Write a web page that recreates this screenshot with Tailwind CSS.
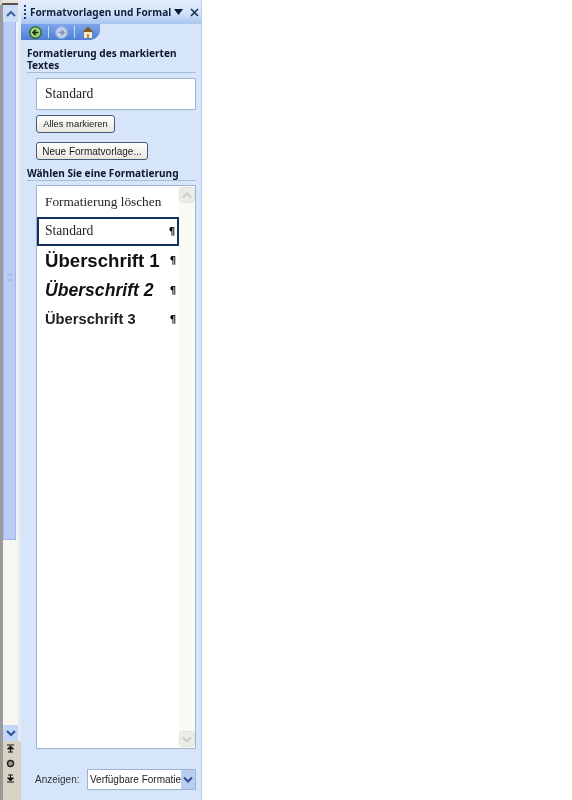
<!DOCTYPE html>
<html lang="de">
<head>
  <meta charset="UTF-8">
  <title>Formatvorlagen und Formatierung</title>
  <script src="https://cdn.jsdelivr.net/npm/@tailwindcss/browser@4"></script>
</head>
<body class="bg-white font-['Noto_Sans',sans-serif] overflow-hidden">
  <div class="flex h-[800px] w-[572px] will-change-transform">
    <!-- Document scrollbar -->
    <div class="w-[18px] flex flex-col shrink-0 bg-[#d8d4c8]">
      <div class="h-[5px] bg-[#e8e6dc] border-b-2 border-[#55524a] ml-[2px]"></div>
      <div class="flex-1 flex flex-col min-h-0 bg-[#f4f7fd] border-l-[3px] border-[#9a9a9a]">
        <div class="h-[17px] bg-[#cbdcf7] flex items-center justify-center shrink-0">
          <svg width="10" height="8" viewBox="0 0 10 8"><path d="M1 6 L5 2 L9 6" fill="none" stroke="#3f5f9e" stroke-width="2"/></svg>
        </div>
        <div class="h-[518px] shrink-0 bg-[#eef3fc]">
          <div class="h-full mr-[2px] bg-[#b9cdf6] border-x border-b border-[#9fb7ea] flex items-center justify-center">
            <div class="w-[6px] h-[7px] border-y-2 border-[#a6bdee] -translate-y-[3px]"></div>
          </div>
        </div>
        <div class="flex-1 bg-[#f6f8f0]"></div>
        <div class="h-[16px] bg-[#c3d6f7] flex items-center justify-center shrink-0">
          <svg width="10" height="8" viewBox="0 0 10 8"><path d="M1 2 L5 6 L9 2" fill="none" stroke="#2f5196" stroke-width="2"/></svg>
        </div>
      </div>
      <div class="h-[59px] shrink-0 flex flex-col items-center pt-[3px] gap-[6px] bg-[#d6d2c4] border-l-[3px] border-[#9a9a94]">
        <svg width="9" height="9" viewBox="0 0 9 9"><path d="M1 1H8M4.5 2L1.5 5H7.5ZM4.5 5V8M2 8H7" fill="#111" stroke="#111"/></svg>
        <svg width="9" height="9" viewBox="0 0 9 9"><circle cx="4.5" cy="4.5" r="3" fill="#9a9a94" stroke="#222" stroke-width="1.4"/></svg>
        <svg width="9" height="9" viewBox="0 0 9 9"><path d="M1 8H8M4.5 7L1.5 4H7.5ZM4.5 4V1M2 1H7" fill="#111" stroke="#111"/></svg>
      </div>
    </div>
    <div class="w-[3px] shrink-0 flex flex-col bg-[#e6eaf0]">
      <div class="flex-1"></div>
      <div class="h-[59px] bg-[#d6d2c4]"></div>
    </div>

    <!-- Task pane -->
    <div class="w-[181px] shrink-0 flex flex-col bg-[#d7e5fa] border-r border-[#b9cdf0]">
      <div class="h-[24px] shrink-0 flex items-center pl-[3px] bg-gradient-to-b from-[#e3eefd] via-[#d5e4fa] to-[#a9c4ee]">
        <div class="w-[2px] h-[14px] mr-[4px] shrink-0 bg-[repeating-linear-gradient(to_bottom,#27415f_0,#27415f_2px,transparent_2px,transparent_4px)]"></div>
        <span class="text-[10.1px] leading-none font-bold text-[#10203f] whitespace-nowrap w-[142px]">Formatvorlagen und Formal</span>
        <svg class="ml-[2px] shrink-0" width="9" height="6" viewBox="0 0 9 6"><path d="M0 0H9L4.5 6Z" fill="#0a1a33"/></svg>
        <svg class="ml-[7px] shrink-0" width="9" height="9" viewBox="0 0 9 9"><path d="M1 1L8 8M8 1L1 8" stroke="#15294f" stroke-width="1.5"/></svg>
      </div>
      <!-- Nav tab -->
      <div class="h-[16px] w-[79px] shrink-0 flex items-center gap-[6px] pl-[8px] bg-gradient-to-b from-[#7ea6ec] to-[#4f7fd2] rounded-br-[10px]">
        <svg width="13" height="13" viewBox="0 0 13 13"><circle cx="6.5" cy="6.5" r="5.7" fill="#a6d684" stroke="#2f6b2f" stroke-width="1.5"/><path d="M9.5 6.5H4.5M6.8 3.8L4 6.5L6.8 9.2" fill="none" stroke="#123012" stroke-width="1.6"/></svg>
        <div class="w-px h-[12px] bg-[#c6d8f7]"></div>
        <svg width="13" height="13" viewBox="0 0 13 13"><circle cx="6.5" cy="6.5" r="5.7" fill="#c6d4ee" stroke="#9db4de" stroke-width="1.5"/><path d="M3.5 6.5H8.5M6.2 3.8L9 6.5L6.2 9.2" fill="none" stroke="#8795b4" stroke-width="1.6"/></svg>
        <div class="w-px h-[12px] bg-[#c6d8f7]"></div>
        <svg width="14" height="14" viewBox="0 0 14 14"><path d="M1 7.5L7 1.5L13 7.5Z" fill="#8a5a2a"/><path d="M3 7H11V13H3Z" fill="#f6eacc"/><path d="M6 9H8V13H6Z" fill="#c9883a"/></svg>
      </div>

      <div class="pl-[6px] pr-[5px] flex flex-col flex-1 min-h-0">
        <h2 class="mt-[7px] text-[10.1px] leading-[12px] font-bold text-[#0c1830] pb-px border-b border-[#a9bdd9]">Formatierung des markierten Textes</h2>
        <div class="mt-[5px] ml-[9px] h-[32px] flex items-center pl-[8px] bg-white border border-[#9db2d4] font-['Liberation_Serif',serif] text-[13.6px] text-[#222]">Standard</div>
        <button class="mt-[5px] ml-[9px] self-start w-[79px] h-[18px] flex items-center justify-center bg-gradient-to-b from-white to-[#e9e7dc] border border-[#44597a] rounded-[3px] font-['Liberation_Sans',sans-serif] text-[9.4px] text-[#1a1a1a]">Alles markieren</button>
        <button class="mt-[9px] ml-[9px] self-start w-[112px] h-[18px] flex items-center justify-center bg-gradient-to-b from-white to-[#e9e7dc] border border-[#44597a] rounded-[3px] font-['Liberation_Sans',sans-serif] text-[10px] text-[#1a1a1a]">Neue Formatvorlage...</button>
        <h2 class="mt-[7px] text-[10.1px] leading-[12px] font-bold text-[#0c1830] pb-px border-b border-[#a9bdd9]">Wählen Sie eine Formatierung</h2>

        <!-- Style list -->
        <div class="mt-[4px] ml-[9px] h-[564px] flex bg-white border border-[#9db2d4]">
          <div class="flex-1 min-w-0 flex flex-col pt-px">
            <div class="h-[29px] flex items-center pl-[8px] font-['Liberation_Serif',serif] text-[13.3px] text-[#222]">Formatierung löschen</div>
            <div class="h-[29px] mt-px flex items-center justify-between pl-[6px] pr-[2px] border-2 border-[#14305c] font-['Liberation_Serif',serif] text-[13.6px] text-[#222]">Standard<span class="font-['DejaVu_Sans',sans-serif] font-bold text-[10px] text-black">¶</span></div>
            <div class="h-[29px] flex items-center justify-between pl-[8px] pr-[3px] font-['Liberation_Sans',sans-serif] font-bold text-[18.6px] text-[#111] whitespace-nowrap">Überschrift 1<span class="font-['DejaVu_Sans',sans-serif] font-bold text-[10px] text-black">¶</span></div>
            <div class="h-[30px] flex items-center justify-between pl-[8px] pr-[3px] font-['Liberation_Sans',sans-serif] font-bold italic text-[17.6px] text-[#111] whitespace-nowrap">Überschrift 2<span class="font-['DejaVu_Sans',sans-serif] font-bold not-italic text-[10px] text-black">¶</span></div>
            <div class="h-[29px] flex items-center justify-between pl-[8px] pr-[3px] font-['Liberation_Sans',sans-serif] font-bold text-[14.7px] text-[#222] whitespace-nowrap">Überschrift 3<span class="font-['DejaVu_Sans',sans-serif] font-bold text-[10px] text-black">¶</span></div>
          </div>
          <div class="w-[16px] shrink-0 flex flex-col bg-[#f9faf4]">
            <div class="h-[16px] mt-px bg-[#eaeee6] border border-[#dde3d8] rounded-sm flex items-center justify-center">
              <svg width="10" height="7" viewBox="0 0 10 7"><path d="M1 5.5L5 1.5L9 5.5" fill="none" stroke="#c9cfc3" stroke-width="2"/></svg>
            </div>
            <div class="flex-1"></div>
            <div class="h-[16px] mb-px bg-[#eaeee6] border border-[#dde3d8] rounded-sm flex items-center justify-center">
              <svg width="10" height="7" viewBox="0 0 10 7"><path d="M1 1.5L5 5.5L9 1.5" fill="none" stroke="#c9cfc3" stroke-width="2"/></svg>
            </div>
          </div>
        </div>

        <div class="mt-[20px] ml-[8px] flex items-center justify-between">
          <span class="font-['Liberation_Sans',sans-serif] text-[10px] text-[#333]">Anzeigen:</span>
          <div class="w-[109px] h-[21px] flex items-center bg-white border border-[#9db2d4]">
            <span class="flex-1 min-w-0 whitespace-nowrap pl-[2px] font-['Liberation_Sans',sans-serif] text-[10px] text-[#222]">Verfügbare Formatie</span>
            <div class="w-[14px] h-full shrink-0 bg-[#b9cdf0] flex items-center justify-center">
              <svg width="10" height="7" viewBox="0 0 10 7"><path d="M1 1.5L5 5.5L9 1.5" fill="none" stroke="#2f5196" stroke-width="2"/></svg>
            </div>
          </div>
        </div>
      </div>
    </div>
  </div>
</body>
</html>
